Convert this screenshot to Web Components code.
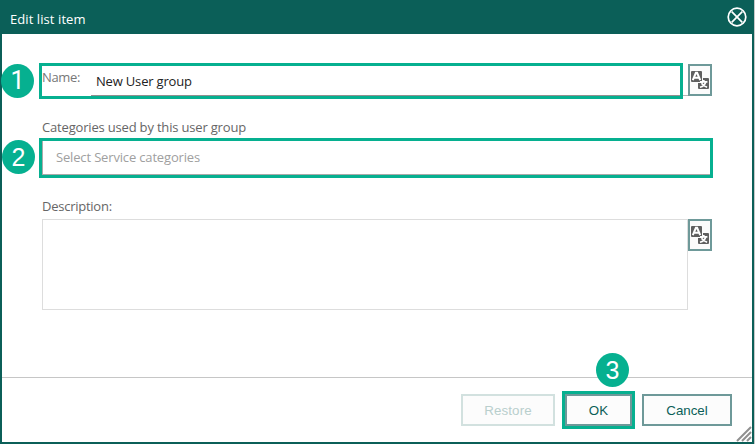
<!DOCTYPE html>
<html lang="en">
<head>
<meta charset="utf-8">
<title>Edit list item</title>
<style>
html,body{margin:0;width:755px;height:444px;overflow:hidden;background:#fff}
body{font-family:"Open Sans","Noto Sans",sans-serif;font-size:13px;color:#666}
</style>
</head>
<body>
<edit-dialog></edit-dialog>
<script>
const define = (name, html) => {
  const template = document.createElement('template');
  template.innerHTML = html;
  customElements.define(name, class extends HTMLElement {
    constructor() {
      super();
      this.attachShadow({mode: 'open'}).append(template.content.cloneNode(true));
    }
  });
};

define('step-badge', `<style>
:host{position:absolute;box-sizing:border-box;width:33px;height:34px;border-radius:50%;background:#06b090;color:#fff;
display:flex;align-items:center;justify-content:center;font:25px/34px var(--digit-font,"Liberation Sans"),Arial,sans-serif;z-index:2}
</style><slot></slot>`);

define('translate-button', `<style>
:host{display:flex;flex:none;box-sizing:border-box;width:24px;height:32px;border:2px solid #6e9999;background:#fbfbfb}
svg{display:block}
</style><svg width="20" height="28" viewBox="0 0 20 28">
<rect x="1" y="5" width="11" height="11" rx="1" fill="#5f5f5f"/>
<path d="M2.8 14.2 5.9 6.8h1.2l3.1 7.4M4.4 11.8h4.2" fill="none" stroke="#fff" stroke-width="2"/>
<path d="M13 12h5q1 0 1 1v9q0 1-1 1H9q-1 0-1-1v-5h5z" fill="#5f5f5f"/>
<path d="M10 15.8h7.4M13.8 14v2M15.7 16q-1 4-5.7 5.3M11.5 17.3q2 3 5.6 4" fill="none" stroke="#fff" stroke-width="1.7"/>
</svg>`);

define('dialog-button', `<style>
:host{display:flex;flex:none;box-sizing:border-box;height:32px;border:2px solid #6e9999;background:#fcfcfc;color:#0b5f58;
align-items:center;justify-content:center;font:13.33px/16px "Liberation Sans",Arial,sans-serif}
:host([disabled]){border-color:#d2e1df;color:#b9cfcd}
:host([active]){outline:3px solid #06b090}
span{padding-top:2px;letter-spacing:var(--track,0)}
</style><span><slot></slot></span>`);

define('dialog-header', `<style>
:host{display:flex;box-sizing:border-box;height:34px;padding:4px 7px 0 10px;background:#0b5f58;color:#fff;justify-content:space-between;align-items:center}
span{line-height:20px;letter-spacing:.08px}
svg{display:block;margin-top:-5px}
</style><span><slot></slot></span><svg width="20" height="20" viewBox="0 0 20 20" fill="none" stroke="#fff" stroke-width="1.7">
<circle cx="10" cy="10" r="8.8"/><path d="m4.7 4.7 10.6 10.6M15.3 4.7 4.7 15.3"/></svg>`);

define('name-field', `<style>
:host{display:flex;height:36px;position:relative;justify-content:space-between}
.frame{box-sizing:border-box;width:644px;height:36px;border:3px solid #06b090;display:flex}
.label{width:49px;line-height:22px;letter-spacing:-.35px;color:#777}
.value{flex:1;height:29px;line-height:31px;border-bottom:1px solid #909090;padding-left:5px;color:#222;letter-spacing:-.18px}
.tail{width:5px;height:1px;background:#b4b4b4;margin-top:32px}
translate-button{margin:1px 1px 0 0}
step-badge{left:-38px;top:1px;--digit-font:Roboto}
</style><div class="frame"><div class="label"><slot name="label"></slot></div><div class="value"><slot></slot></div></div>
<div class="tail"></div><translate-button></translate-button><step-badge>1</step-badge>`);

define('category-field', `<style>
:host{display:block;position:relative;margin-top:18px}
.label{height:21px;line-height:21px;padding-left:3px;letter-spacing:-.18px}
.frame{box-sizing:border-box;height:40px;border:3px solid #06b090}
.value{box-sizing:border-box;height:34px;line-height:33px;border-left:1px solid #aaa;border-bottom:1px solid #aaa;padding-left:13px;color:#a0a0a0;letter-spacing:-.16px}
step-badge{left:-37px;top:23px}
</style><div class="label"><slot name="label"></slot></div><div class="frame"><div class="value"><slot></slot></div></div><step-badge>2</step-badge>`);

define('description-field', `<style>
:host{display:block;margin-top:18px;padding-left:3px}
.label{height:23px;line-height:21px;letter-spacing:-.25px}
.row{display:flex}
.area{box-sizing:border-box;width:646px;height:91px;border:1px solid #ddd}
</style><div class="label"><slot></slot></div><div class="row"><div class="area"></div><translate-button></translate-button></div>`);

define('dialog-footer', `<style>
:host{display:flex;position:relative;box-sizing:border-box;height:65px;border-top:1px solid #c6c6c6;padding:16px 20px 0 0;justify-content:flex-end}
.restore{width:94px;margin-right:10px;--track:.1px}
.ok{width:67px;margin-right:10px}
.cancel{width:90px}
step-badge{left:594px;top:-25px}
svg{position:absolute;right:0;bottom:0}
</style><dialog-button class="restore" disabled>Restore</dialog-button><dialog-button class="ok" active>OK</dialog-button><dialog-button class="cancel">Cancel</dialog-button>
<step-badge>3</step-badge><svg width="16" height="16" viewBox="0 0 16 16" stroke="#909090" stroke-width="2"><path d="M1 15 15 1M6 15l9-9M11 15l4-4"/></svg>`);

define('edit-dialog', `<style>
:host{display:flex;flex-direction:column;box-sizing:border-box;width:755px;height:444px;border-right:1px solid #c8c8c8;background:#0b5f58}
.content{flex:1;display:flex;flex-direction:column;margin:0 2px 2px;background:#fff}
main{flex:1;padding:29px 39px 0 37px}
</style><dialog-header>Edit list item</dialog-header><div class="content"><main>
<name-field><span slot="label">Name:</span>New User group</name-field>
<category-field><span slot="label">Categories used by this user group</span>Select Service categories</category-field>
<description-field>Description:</description-field>
</main><dialog-footer></dialog-footer></div>`);
</script>
</body>
</html>
